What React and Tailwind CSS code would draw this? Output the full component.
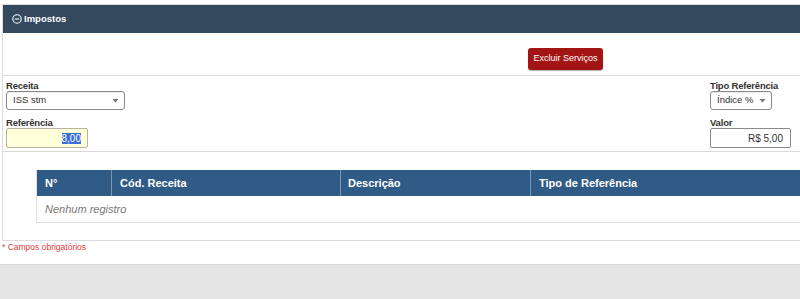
const font = { fontFamily: '"Liberation Sans", Arial, sans-serif' };

function Caret() {
  return (
    <svg width="7" height="5" viewBox="0 0 7 5" className="shrink-0">
      <path d="M0.5 1 L6.5 1 L3.5 4.5 Z" fill="#777" />
    </svg>
  );
}

function SelectBox({ value, className }) {
  return (
    <div
      className={`flex h-[19px] items-center justify-between rounded-[3px] border border-[#8a8a8a] bg-white pl-[6px] pr-[5px] text-[9.5px] text-[#333] shadow-[inset_0_1px_1px_rgba(0,0,0,0.08)] ${className}`}
    >
      <span>{value}</span>
      <Caret />
    </div>
  );
}

function Label({ children }) {
  return <div className="h-[11px] text-[9.5px] font-bold leading-[11px] tracking-[-0.2px] text-[#333]">{children}</div>;
}

export default function App() {
  return (
    <div className="flex h-[299px] w-[800px] flex-col overflow-hidden bg-white" style={font}>
      <div className="pt-[4px]">
        <div className="ml-[2px] border-x border-y border-[#dcdcdc] border-r-0">
          {/* Header */}
          <div className="flex h-[28px] items-center gap-[2px] bg-[#34495e] pl-[9px] text-[9.5px] font-bold text-white">
            <svg width="10" height="10" viewBox="0 0 10 10">
              <circle cx="5" cy="5" r="4.2" fill="none" stroke="white" strokeWidth="1.1" />
              <path d="M2.8 5 H7.2" stroke="white" strokeWidth="1.1" />
            </svg>
            <span>Impostos</span>
          </div>

          {/* Actions */}
          <div className="flex h-[43px] items-start border-b border-[#d8d8d8] pl-[525px] pt-[15px]">
            <button className="h-[22px] w-[75px] rounded-[3px] bg-[#a31515] text-[9px] text-white shadow-[0_1px_1px_rgba(0,0,0,0.3)]">
              Excluir Serviços
            </button>
          </div>

          {/* Form */}
          <div className="flex justify-between border-b border-[#d8d8d8] pb-[3px] pl-[3px] pr-[9px] pt-[4px]">
            <div className="flex flex-col">
              <Label>Receita</Label>
              <SelectBox value="ISS stm" className="w-[119px]" />
              <div className="mt-[7px]" />
              <Label>Referência</Label>
              <div className="flex h-[20px] w-[82px] items-center justify-end rounded-[2px] border border-[#b5b5a0] bg-[#ffffd9] pr-[6px] text-[10px]">
                <span className="bg-[#3a6fd8] leading-[11px] text-white">8,00</span>
              </div>
            </div>
            <div className="flex flex-col">
              <Label>Tipo Referência</Label>
              <SelectBox value="Índice %" className="w-[62px]" />
              <div className="mt-[7px]" />
              <Label>Valor</Label>
              <div className="flex h-[20px] w-[81px] items-center justify-end rounded-[2px] border border-[#8a8a8a] bg-white pr-[7px] text-[10px] text-[#333]">
                R$ 5,00
              </div>
            </div>
          </div>

          {/* Table */}
          <div className="pb-[17px] pl-[33px] pt-[18px]">
            <div className="border-b border-l border-[#dedede]">
              <div className="grid h-[26px] grid-cols-[75px_229px_190px_1fr] bg-[#315b87] text-[11px] font-bold text-white">
                <div className="flex items-center border-r border-[#7d97b3] pl-[8px]">N°</div>
                <div className="flex items-center border-r border-[#7d97b3] pl-[8px]">Cód. Receita</div>
                <div className="flex items-center border-r border-[#7d97b3] pl-[7px]">Descrição</div>
                <div className="flex items-center pl-[8px]">Tipo de Referência</div>
              </div>
              <div className="flex h-[26px] items-center pl-[8px] text-[11px] italic text-[#777]">Nenhum registro</div>
            </div>
          </div>
        </div>
        <div className="pl-[2px] text-[8.5px] leading-[12px] text-[#e23a3a]">* Campos obrigatórios</div>
      </div>
      <div className="mt-auto h-[35px] border-t border-[#d6d6d6] bg-[#e5e5e5]" />
    </div>
  );
}
